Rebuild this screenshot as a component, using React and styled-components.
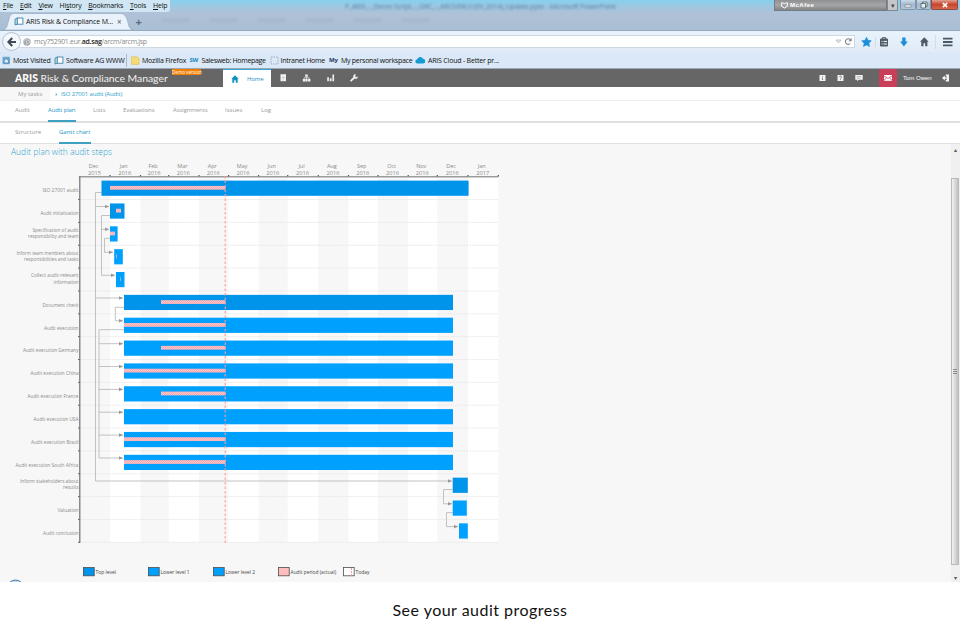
import React from "react";
import styled, { createGlobalStyle } from "styled-components";

const months = [
  ["Dec", "2015", 80],
  ["Jan", "2016", 110],
  ["Feb", "2016", 140.5],
  ["Mar", "2016", 168.7],
  ["Apr", "2016", 199],
  ["May", "2016", 228.6],
  ["Jun", "2016", 258.6],
  ["Jul", "2016", 287.7],
  ["Aug", "2016", 318.3],
  ["Sep", "2016", 348.5],
  ["Oct", "2016", 378],
  ["Nov", "2016", 408.2],
  ["Dec", "2016", 437.3],
  ["Jan", "2017", 468],
];
const chartEnd = 498.3;
const rowHeight = 22.85;

const TOP = "#0095eb";
const LOW = "#00a0ff";

// lines: [text, width], bar and actual: [from, to]
const tasks = [
  { lines: [["ISO 27001 audit", 36]], bar: [101.5, 468.6], fill: TOP, actual: [110, 225.5] },
  { lines: [["Audit initialization", 38]], bar: [110, 124.5], fill: TOP, actual: [116, 121] },
  {
    lines: [["Specification of audit", 46], ["responsibility and team", 50.5]],
    bar: [110, 117.6],
    fill: LOW,
    actual: [110, 115],
  },
  {
    lines: [["Inform team members about", 62], ["responsibilities and tasks", 54.5]],
    bar: [114.2, 122.8],
    fill: LOW,
    actual: [116, 116.7],
  },
  {
    lines: [["Collect audit-relevant", 47.5], ["information", 25]],
    bar: [116, 124.5],
    fill: LOW,
    actual: [120, 120.6],
  },
  { lines: [["Document check", 36]], bar: [124, 453], fill: TOP, actual: [161, 225.5] },
  { lines: [["Audit execution", 34.5]], bar: [124, 453], fill: LOW, actual: [124, 225.5] },
  { lines: [["Audit execution Germany", 55.5]], bar: [124, 453], fill: LOW, actual: [161, 225.5] },
  { lines: [["Audit execution China", 48]], bar: [124, 453], fill: LOW, actual: [124, 225.5] },
  { lines: [["Audit execution France", 51]], bar: [124, 453], fill: LOW, actual: [161, 225.5] },
  { lines: [["Audit execution USA", 45]], bar: [124, 453], fill: LOW },
  { lines: [["Audit execution Brazil", 47.5]], bar: [124, 453], fill: LOW, actual: [124, 225.5] },
  { lines: [["Audit execution South Africa", 63]], bar: [124, 453], fill: LOW, actual: [124, 225.5] },
  { lines: [["Inform stakeholders about", 58.5], ["results", 15.5]], bar: [452.7, 467.8], fill: TOP },
  { lines: [["Valuation", 21]], bar: [452.7, 466.8], fill: LOW },
  { lines: [["Audit conclusion", 35.5]], bar: [459, 467.8], fill: LOW },
];

const links = [
  "M101.5 192.5H95.5V481H452",
  "M95.5 206.5H109",
  "M95.5 298H123",
  "M110 215.5H101.5V275.3H115",
  "M101.5 229.3H109",
  "M110 238.3H104.5V252.3H113",
  "M124 307.3H115.3V320.8H123",
  "M124 329.7H99V458H123",
  "M99 343.7H123",
  "M99 366.5H123",
  "M99 389.4H123",
  "M99 412.2H123",
  "M99 435.1H123",
  "M452.5 489.5H443.5V503.8H452",
  "M452.5 512.6H446.5V526.6H458",
];

const legend = [
  { x: 83, label: "Top level", width: 20.5, fill: TOP },
  { x: 148, label: "Lower level 1", width: 29, fill: LOW },
  { x: 213, label: "Lower level 2", width: 29.5, fill: LOW },
  { x: 278, label: "Audit period (actual)", width: 45.5, fill: "#ffbcbc" },
  { x: 343, label: "Today", width: 14, fill: "#fff" },
];

const GanttChart = () => {
  return (
    <ChartSvg viewBox="0 158 951 424">
      <defs>
        <pattern id="hatch" width="2" height="2" patternUnits="userSpaceOnUse">
          <rect width="2" height="2" fill="#ffc4c6" />
          <rect width="1" height="1" fill="#f5a9b0" />
          <rect x="1" y="1" width="1" height="1" fill="#f5a9b0" />
        </pattern>
        <marker
          id="arrow"
          viewBox="0 0 4 4"
          refX="4"
          refY="2"
          markerWidth="4"
          markerHeight="4"
          markerUnits="userSpaceOnUse"
        >
          <path d="M0 0.2L4 2L0 3.8z" fill="#999" />
        </marker>
      </defs>
      {months.map(([name, year, x], i) => {
        const end = i < months.length - 1 ? months[i + 1][2] : chartEnd;
        const mid = (x + end) / 2;
        return (
          <g key={i}>
            {i % 2 === 1 && (
              <rect x={x} y="177" width={end - x} height="365" fill="#fff" />
            )}
            <text x={mid - 1.5} y="168.4" textAnchor="middle">
              {name}
            </text>
            <text
              x={mid - 7}
              y="175.4"
              textLength="13"
              lengthAdjust="spacingAndGlyphs"
            >
              {year}
            </text>
            <rect x={end - 0.6} y="175" width="1.2" height="1.6" fill="#555" />
          </g>
        );
      })}
      {tasks.map((task, i) => (
        <g key={i}>
          <line
            x1="80"
            x2={chartEnd}
            y1={176.7 + rowHeight * (i + 1)}
            y2={176.7 + rowHeight * (i + 1)}
            stroke="#e6e6e6"
            strokeWidth="0.8"
            strokeDasharray="2 0.7"
          />
          <rect x="78" y={176.2 + rowHeight * (i + 1)} width="2" height="1" fill="#666" />
        </g>
      ))}
      <rect x="79" y="176.2" width={chartEnd - 79} height="1.2" fill="#858585" />
      <rect x="79.2" y="176.2" width="1.2" height="366.5" fill="#6f6f6f" />
      {links.map((d) => (
        <path
          key={d}
          d={d}
          fill="none"
          stroke="#b4b4b4"
          strokeWidth="0.8"
          markerEnd="url(#arrow)"
        />
      ))}
      {tasks.map((task, i) => {
        const top = 180.6 + rowHeight * i;
        return (
          <g key={i}>
            {task.lines.map(([text, width], n) => (
              <text
                key={text}
                x={78.5 - width}
                y={top + 11.8 - (task.lines.length - 1 - n) * 6.4}
                textLength={width}
                lengthAdjust="spacingAndGlyphs"
              >
                {text}
              </text>
            ))}
            <rect
              x={task.bar[0]}
              y={top}
              width={task.bar[1] - task.bar[0]}
              height="15.2"
              fill={task.fill}
            />
            {task.actual && (
              <rect
                x={task.actual[0]}
                y={top + 5.3}
                width={task.actual[1] - task.actual[0]}
                height="3.8"
                fill="url(#hatch)"
              />
            )}
          </g>
        );
      })}
      <line
        x1="225.2"
        x2="225.2"
        y1="176"
        y2="543"
        stroke="#ff9a9a"
        strokeWidth="1.1"
        strokeDasharray="2.6 1.9"
      />
      {legend.map((item) => (
        <g key={item.label}>
          <rect
            x={item.x + 0.4}
            y="567.6"
            width="10.8"
            height="8.2"
            fill={item.fill}
            stroke="#4c4c4c"
            strokeWidth="0.8"
          />
          {item.label === "Today" && (
            <line x1="351.5" x2="351.5" y1="568" y2="575.6" stroke="#ff9a9a" strokeDasharray="2 1" />
          )}
          <text
            className="legend"
            x={item.x + 12.6}
            y="573.6"
            textLength={item.width}
            lengthAdjust="spacingAndGlyphs"
          >
            {item.label}
          </text>
        </g>
      ))}
      <circle cx="15.5" cy="588" r="8" fill="#c5d9ea" stroke="#3f77a5" strokeWidth="1" />
    </ChartSvg>
  );
};

const BrowserTop = () => {
  return (
    <TitleBar>
      <GhostTitle>
        P_ARIS_-_Demo Script_-_GRC_-_ARCM98.0 (09_2014)_Update.pptx - Microsoft PowerPoint
      </GhostTitle>
      <GhostMenu>
        <i /> <i /> <i /> <i /> <i /> <i />
      </GhostMenu>
      <MenuBar>
        {["File", "Edit", "View", "History", "Bookmarks", "Tools", "Help"].map((item) => {
          const at = item === "History" ? 2 : 0;
          return (
            <MenuItem key={item}>
              {item.slice(0, at)}
              <u>{item[at]}</u>
              {item.slice(at + 1)}
            </MenuItem>
          );
        })}
      </MenuBar>
      <WindowControls>
        <McAfee>
          <svg width="7" height="7" viewBox="0 0 7 7">
            <path d="M0.6 0.9H2.4L3.5 2L4.6 0.9H6.4V4.2L3.5 6L0.6 4.2z" fill="none" stroke="#fff" />
          </svg>
          McAfee
        </McAfee>
        <McDrop>▾</McDrop>
        <WinButton $width={16}>
          <svg width="8" height="8" viewBox="0 0 8 8">
            <rect x="1" y="4" width="6" height="2" fill="#fff" stroke="#667" strokeWidth="0.5" />
          </svg>
        </WinButton>
        <WinButton $width={15}>
          <svg width="8" height="8" viewBox="0 0 8 8">
            <path d="M2.5 2.5V1h4.5v4.5H5.5M1 2.5h4.5V7H1z" fill="#e8eef5" stroke="#566" strokeWidth="0.9" />
          </svg>
        </WinButton>
        <WinButton $width={27} $close>
          <svg width="8" height="8" viewBox="0 0 8 8">
            <path d="M1.8 2l4.4 4.2M6.2 2L1.8 6.2" stroke="#fff" strokeWidth="1.7" />
          </svg>
        </WinButton>
      </WindowControls>
      <TabStrip>
        <BrowserTab>
          <svg className="shape" width="132" height="17" viewBox="0 0 132 17">
            <path
              d="M0 17C6 16 5 12 7 6C8 2 9 0.5 13 0.5H118C122 0.5 123 2 125 6C127 12 126 16 132 17z"
              fill="#e9f2fb"
              stroke="#8fa3b8"
              strokeWidth="0.6"
            />
          </svg>
          <PageIcon />
          <span>ARIS Risk &amp; Compliance M...</span>
          <b>×</b>
        </BrowserTab>
        <NewTab>+</NewTab>
      </TabStrip>
    </TitleBar>
  );
};

const PageIcon = () => (
  <svg width="10" height="9" viewBox="0 0 10 9">
    <path d="M1 2.2L3.5 1v6.2L1 8z" fill="#b9dcee" stroke="#3c7796" strokeWidth="0.8" />
    <rect x="3.3" y="1" width="5.6" height="6.2" fill="#fff" stroke="#3f86ab" strokeWidth="0.9" />
  </svg>
);

const NavBar = () => {
  return (
    <Nav>
      <BackButton>
        <svg width="10" height="10" viewBox="0 0 10 10">
          <path d="M5.2 1L1.4 5L5.2 9M1.6 5H9" fill="none" stroke="#3f4b57" strokeWidth="2.1" />
        </svg>
      </BackButton>
      <UrlBox>
        <svg width="8" height="8" viewBox="0 0 8 8">
          <circle cx="4" cy="4" r="3.7" fill="#a4a9ae" />
          <path d="M1 2.5l2-1.2l1 1L3 4l1.2 1.2L3.5 7M5 1.2l.4 1.5L7 3.5L5.8 5.6" fill="none" stroke="#e5e8ea" strokeWidth="0.7" />
        </svg>
        <p>
          mcy752901.eur.<b>ad.sag</b>/arcm/arcm.jsp
        </p>
        <svg width="17" height="9" viewBox="0 0 17 9">
          <path d="M1 3h5L3.5 6z" fill="#eee" stroke="#a9afb5" strokeWidth="0.7" />
          <path d="M15.3 6.5a2.8 2.8 0 1 1 0-3.8" fill="none" stroke="#7b858f" strokeWidth="1.1" />
          <path d="M16.6 0.8v3.4h-3.2z" fill="#7b858f" />
        </svg>
      </UrlBox>
      <NavIcons viewBox="0 0 104 18">
        <path d="M10.5 4.3l1.5 3l3.3.5l-2.4 2.4l.6 3.3l-3-1.6l-3 1.6l.6-3.3L5.7 7.8l3.3-.5z" fill="#1e8fd6" stroke="#1e8fd6" strokeWidth="0.6" />
        <path d="M19.5 4v10M79.5 2v14" stroke="#ccd8e4" strokeWidth="0.8" />
        <rect x="24" y="5.6" width="8" height="8" rx="1" fill="#4f5a66" />
        <path d="M26.3 6V4.7h3.4V6" fill="none" stroke="#4f5a66" />
        <path d="M25.5 8.4h1M27.5 8.4h3.5M25.5 11h1M27.5 11h3.5" stroke="#fff" strokeWidth="1" />
        <path d="M46.2 4.5h3.4v4h2.2L47.9 13.5L44 8.500h2.2z" fill="#1e8fd6" />
        <path d="M68.3 4.3L64 8.7h1.3v4.6h2.2v-3h1.7v3h2.2V8.7h1.3z" fill="#4f5a66" />
        <path d="M87 5.6h9.5M87 9h9.5M87 12.4h9.5" stroke="#4c5864" strokeWidth="1.9" />
      </NavIcons>
    </Nav>
  );
};

const BookmarksBar = () => {
  return (
    <Bookmarks>
      <Bookmark $width={52}>
        <svg width="9" height="9" viewBox="0 0 9 9">
          <rect x="0.5" y="0.8" width="7.5" height="7.5" rx="1" fill="#6fa9d2" />
          <path d="M2 7V4.5L4.3 2.5L6.5 4.5V7z" fill="#d7ebf7" stroke="#2f78aa" strokeWidth="0.7" />
        </svg>
        Most Visited
      </Bookmark>
      <Bookmark $width={73} $divider>
        <PageIcon />
        Software AG WWW
      </Bookmark>
      <Bookmark $width={58.5}>
        <svg width="9" height="9" viewBox="0 0 9 9">
          <path d="M0.6 0.8h5.4l2 1.6v6H0.6z" fill="#f6dc72" stroke="#d7b645" strokeWidth="0.5" />
        </svg>
        Mozilla Firefox
      </Bookmark>
      <Bookmark $width={80} $space={-0.31}>
        <em>SW</em>
        Salesweb: Homepage
      </Bookmark>
      <Bookmark $width={59.5} $space={-0.26}>
        <svg width="9" height="9" viewBox="0 0 9 9">
          <rect x="1" y="1" width="7" height="7" fill="none" stroke="#93a0ab" strokeWidth="0.8" strokeDasharray="1.5 1" />
        </svg>
        Intranet Home
      </Bookmark>
      <Bookmark $width={86} $space={-0.27}>
        <em className="my">My</em>
        My personal workspace
      </Bookmark>
      <Bookmark $width={90}>
        <svg width="11" height="8" viewBox="0 0 11 8">
          <path d="M2.6 7.5a2.1 2.1 0 0 1-.3-4.2A3 3 0 0 1 8 2.8a2.4 2.4 0 0 1 .5 4.7z" fill="#149bd2" />
        </svg>
        ARIS Cloud - Better pr...
      </Bookmark>
    </Bookmarks>
  );
};

const AppHeader = () => {
  return (
    <Header>
      <Brand>
        <b>ARIS</b> Risk &amp; Compliance Manager
      </Brand>
      <Demo>Demo version</Demo>
      <HomeTab>
        <svg width="8" height="8" viewBox="0 0 8 8">
          <path d="M4 0.3L0.3 4H1.3v3.700h1.900V5.200h1.600v2.500h1.900V4h1z" fill="#1390bf" />
        </svg>
        Home
      </HomeTab>
      <HeaderIcons viewBox="0 0 100 18">
        <path d="M9.500 5.200h5.500v7h-5.500z" fill="#f4f4f4" />
        <path d="M9.500 8.700h5.500M12.200 5.200v7" stroke="#bbb" strokeWidth="0.500" />
        <path d="M34.200 5.400h2.600v2.400h-2.600zM31.800 10h2.400v2.400h-2.400zM34.400 10h2.200v2.400h-2.200zM37 10h2.400v2.400H37z" fill="#eee" />
        <path d="M33 10V8.800h5.200V10M35.500 7.500V10" fill="none" stroke="#eee" strokeWidth="0.700" />
        <path d="M56.200 8.300h1.700v4h-1.700zM58.800 9.300h1.700v3h-1.700zM61.400 5.600h1.700v6.700h-1.700z" fill="#eee" />
        <path d="M79.600 12.200l3.900-3.900" stroke="#f2f2f2" strokeWidth="1.800" />
        <path d="M84.900 5.300a2.300 2.300 0 1 0 1.900 2.100l-1.700.8l-.9-.9z" fill="#f2f2f2" />
      </HeaderIcons>
      <Spacer />
      <InfoIcons viewBox="0 0 50 18">
        <rect x="0.500" y="6" width="6" height="6" fill="#f2f2f2" />
        <path d="M3.500 7v.8M3.500 8.600v2.400" stroke="#777" strokeWidth="0.900" />
        <rect x="18.500" y="6" width="6" height="6" fill="#f2f2f2" />
        <path d="M20.600 8a.9.9 0 1 1 1.300.8l-.3.800M21.600 10.300v.8" fill="none" stroke="#666" strokeWidth="0.800" />
        <path d="M36.300 6h7.400v4.800h-4l-1.500 1.500v-1.500h-1.900z" fill="#f2f2f2" />
        <path d="M37.800 7.700h4.400M37.800 9.200h3" stroke="#999" strokeWidth="0.600" />
      </InfoIcons>
      <MailButton>
        <svg width="8" height="6" viewBox="0 0 8 6">
          <rect width="8" height="5.800" fill="#fff" />
          <path d="M0 1l4 2.500L8 1M0 5.200l2.300-2M8 5.200l-2.300-2" fill="none" stroke="#c93f59" strokeWidth="0.800" />
        </svg>
      </MailButton>
      <UserName>Tom Owen</UserName>
      <svg width="8" height="8" viewBox="0 0 8 8">
        <path d="M3.800 0.500h3.200v7H3.800V5.800h1V2.200h-1z" fill="#f4f4f4" />
        <path d="M0 4l2.800-2.500v1.700h2v1.600h-2v1.700z" fill="#f4f4f4" />
      </svg>
    </Header>
  );
};

const App = () => {
  return (
    <Page>
      <GlobalStyle />
      <BrowserTop />
      <NavBar />
      <BookmarksBar />
      <AppHeader />
      <Crumbs>
        <Crumb $width={37}>My tasks</Crumb>
        <Crumb $width={100} $active>
          <i>›</i>ISO 27001 audit (Audit)
        </Crumb>
      </Crumbs>
      <Tabs $height={22} $line={2}>
        <Tab $width={15}>Audit</Tab>
        <Tab $width={28} $gap={18} $active $space={-0.12}>Audit plan</Tab>
        <Tab $width={13} $gap={17}>Lists</Tab>
        <Tab $width={32} $gap={17} $space={-0.05}>Evaluations</Tab>
        <Tab $width={35} $gap={18} $space={-0.1}>Assignments</Tab>
        <Tab $width={19} $gap={17}>Issues</Tab>
        <Tab $width={11} $gap={17}>Log</Tab>
      </Tabs>
      <Tabs $height={21} $line={1}>
        <Tab $width={27}>Structure</Tab>
        <Tab $width={32} $gap={17} $active $space={-0.03}>Gantt chart</Tab>
      </Tabs>
      <Content>
        <Main>
          <h2>Audit plan with audit steps</h2>
          <GanttChart />
        </Main>
        <ScrollBar>
          <ScrollArrow>▴</ScrollArrow>
          <Thumb>
            <i />
            <i />
            <i />
          </Thumb>
          <ScrollArrow>▾</ScrollArrow>
        </ScrollBar>
      </Content>
      <Caption>See your audit progress</Caption>
    </Page>
  );
};

const GlobalStyle = createGlobalStyle`
  * {
    margin: 0;
    padding: 0;
    box-sizing: border-box;
  }
  body {
    background: #fff;
    font-family: "Open Sans", sans-serif;
    overflow: hidden;
  }
  svg {
    display: block;
    flex-shrink: 0;
  }
`;

const Page = styled.div`
  display: flex;
  flex-direction: column;
  width: 960px;
  height: 637px;
  background: #fff;
`;

const TitleBar = styled.div`
  position: relative;
  height: 31px;
  flex-shrink: 0;
  display: flex;
  flex-wrap: wrap;
  justify-content: space-between;
  align-content: space-between;
  border-bottom: 1px solid #92a9bf;
  background: linear-gradient(#86d0ee 0, #a0c7e0 7px, #b0c1d6 14px, #a9bfd3 30px);
  overflow: hidden;
`;

const GhostTitle = styled.p`
  position: absolute;
  left: 345px;
  top: 1px;
  width: 280px;
  font-size: 7px;
  line-height: 11px;
  letter-spacing: -0.2px;
  white-space: nowrap;
  color: #28587c;
  opacity: 0.6;
  filter: blur(0.9px);
`;

const GhostMenu = styled.div`
  position: absolute;
  left: 162px;
  top: 19px;
  display: flex;
  gap: 20px;
  filter: blur(1.5px);
  opacity: 0.35;
  i {
    width: 28px;
    height: 3px;
    background: #8fa4bb;
  }
`;

const MenuBar = styled.div`
  position: relative;
  display: flex;
  align-items: center;
  gap: 6.8px;
  width: 170px;
  height: 12px;
  padding-left: 3px;
  background: linear-gradient(90deg, #d3e7f3, #cfe6f4);
  border-radius: 0 0 3px 0;
`;

const MenuItem = styled.span`
  font-size: 7px;
  line-height: 12px;
  letter-spacing: -0.22px;
  color: #111;
  u {
    text-decoration-thickness: 0.5px;
    text-underline-offset: 1px;
  }
`;

const WindowControls = styled.div`
  display: flex;
  height: 11px;
  margin-right: 2px;
`;

const McAfee = styled.div`
  display: flex;
  align-items: center;
  gap: 2px;
  width: 113px;
  padding-left: 6px;
  font: bold 6px/10px "Liberation Sans", sans-serif;
  letter-spacing: 0.5px;
  color: #fff;
  background: linear-gradient(#8e9092, #a5a6a7 50%, #838587);
  border: 1px solid #747a80;
  border-top: none;
`;

const McDrop = styled.div`
  width: 11px;
  margin-right: 2px;
  font-size: 7px;
  line-height: 11px;
  text-align: center;
  color: #444;
  background: #c4c6c9;
  border: 1px solid #82888e;
  border-top: none;
`;

const WinButton = styled.div`
  display: flex;
  align-items: center;
  justify-content: center;
  width: ${(props) => props.$width}px;
  height: 10px;
  border: 1px solid ${(props) => (props.$close ? "#8d4a44" : "#8195aa")};
  border-top: none;
  border-radius: 0 0 2px 2px;
  background: ${(props) =>
    props.$close
      ? "linear-gradient(#e0a092, #c8452c 50%, #d4664a)"
      : "linear-gradient(#cbdbe9, #a3b9cf 50%, #b3c8da)"};
`;

const TabStrip = styled.div`
  position: relative;
  display: flex;
  align-items: center;
  width: 100%;
  height: 17px;
  padding-left: 5px;
`;

const BrowserTab = styled.div`
  position: relative;
  display: flex;
  align-items: center;
  width: 127px;
  height: 17px;
  padding-left: 9px;
  font-size: 7px;
  letter-spacing: -0.12px;
  color: #111;
  white-space: nowrap;
  > * {
    position: relative;
  }
  .shape {
    position: absolute;
    left: -3px;
    top: 0;
  }
  span {
    width: 91px;
    margin-left: 2px;
  }
  b {
    font-size: 8px;
    color: #777;
  }
`;

const NewTab = styled.span`
  margin-left: 3.5px;
  font: bold 11px/15px "Open Sans", sans-serif;
  color: #5b6c7c;
`;

const Nav = styled.div`
  display: flex;
  align-items: center;
  height: 21px;
  flex-shrink: 0;
  background: linear-gradient(#e9f3fc, #e0ebf7);
`;

const BackButton = styled.div`
  position: relative;
  display: flex;
  align-items: center;
  justify-content: center;
  width: 19px;
  height: 19px;
  margin-left: 2px;
  background: #f3f8fc;
  border: 1px solid #b4c3d1;
  border-radius: 50%;
`;

const UrlBox = styled.div`
  display: flex;
  align-items: center;
  width: 836px;
  height: 13px;
  margin-left: -2px;
  padding: 0 2px 0 4px;
  background: #fff;
  border: 1px solid #ccd8e3;
  border-left: none;
  p {
    flex: 1;
    margin-left: 3px;
    font-size: 7px;
    letter-spacing: -0.31px;
    line-height: 11px;
    color: #8a8a8a;
  }
  b {
    font-weight: 600;
    color: #222;
  }
`;

const NavIcons = styled.svg`
  width: 104px;
  height: 18px;
  margin-left: 1px;
`;

const Bookmarks = styled.div`
  display: flex;
  align-items: center;
  height: 17px;
  flex-shrink: 0;
  padding-left: 2px;
  background: #dae8f7;
  border-bottom: 1px solid #9aa7b6;
`;

const Bookmark = styled.div`
  display: flex;
  align-items: center;
  gap: 2px;
  width: ${(props) => props.$width}px;
  height: 13px;
  font-size: 7px;
  letter-spacing: ${(props) => props.$space || -0.2}px;
  white-space: nowrap;
  color: #111;
  border-right: ${(props) => (props.$divider ? "1px solid #aebac6" : "none")};
  margin-right: ${(props) => (props.$divider ? "4px" : "0")};
  em {
    width: 10px;
    font: bold 6px "Open Sans", sans-serif;
    color: #1687c4;
  }
  .my {
    color: #26335c;
  }
`;

const Header = styled.div`
  display: flex;
  align-items: center;
  height: 18px;
  flex-shrink: 0;
  padding: 0 10px 0 15px;
  background: #666;
`;

const Brand = styled.h1`
  width: 157px;
  font: 400 10.4px/18px Lato, sans-serif;
  letter-spacing: -0.02px;
  white-space: nowrap;
  color: #f2f2f2;
  b {
    font-weight: 900;
    color: #fff;
  }
`;

const Demo = styled.span`
  align-self: flex-start;
  width: 29px;
  height: 6px;
  font: 4.6px/6px "Open Sans", sans-serif;
  text-align: center;
  white-space: nowrap;
  color: #fff;
  background: #f07d00;
`;

const HomeTab = styled.div`
  display: flex;
  align-items: center;
  gap: 8px;
  width: 48px;
  height: 18px;
  margin-left: 22px;
  padding-left: 8px;
  font-size: 6px;
  letter-spacing: -0.1px;
  color: #1894c2;
  background: #fff;
  border-top: 1px solid #35a9d3;
`;

const HeaderIcons = styled.svg`
  width: 100px;
  height: 18px;
`;

const Spacer = styled.div`
  flex: 1;
`;

const InfoIcons = styled.svg`
  width: 50px;
  height: 18px;
`;

const MailButton = styled.div`
  display: flex;
  align-items: center;
  justify-content: center;
  width: 18px;
  height: 18px;
  margin-left: 10px;
  background: #c93f59;
`;

const UserName = styled.span`
  width: 39px;
  margin-left: 6px;
  font: 6px/18px "Liberation Sans", sans-serif;
  white-space: nowrap;
  color: #fff;
`;

const Crumbs = styled.div`
  display: flex;
  align-items: center;
  height: 14px;
  flex-shrink: 0;
  padding-left: 18px;
  border-bottom: 1px solid #eee;
  background: linear-gradient(90deg, #f7f7f7 50px, #fff 51px);
`;

const Crumb = styled.span`
  display: flex;
  width: ${(props) => props.$width}px;
  font-size: 6px;
  letter-spacing: ${(props) => (props.$active ? -0.13 : 0)}px;
  white-space: nowrap;
  color: ${(props) => (props.$active ? "#2ba3cb" : "#999")};
  i {
    width: 6px;
    font-style: normal;
    font-weight: bold;
  }
`;

const Tabs = styled.div`
  display: flex;
  height: ${(props) => props.$height}px;
  flex-shrink: 0;
  padding-left: 15px;
  border-bottom: ${(props) => props.$line}px solid #e0e0e0;
`;

const Tab = styled.span`
  width: ${(props) => props.$width}px;
  height: 21px;
  margin-left: ${(props) => props.$gap || 0}px;
  font-size: 6px;
  line-height: 18px;
  letter-spacing: ${(props) => props.$space || 0}px;
  white-space: nowrap;
  color: ${(props) => (props.$active ? "#1d96c0" : "#999")};
  border-bottom: 2px solid ${(props) => (props.$active ? "#3fa0c1" : "transparent")};
`;

const Content = styled.div`
  display: flex;
  height: 438px;
  flex-shrink: 0;
  background: #f7f7f7;
`;

const Main = styled.div`
  width: 951px;
  h2 {
    height: 14px;
    padding-left: 11px;
    font: 300 8.5px/15px "Open Sans", sans-serif;
    color: #2fa3cc;
  }
`;

const ChartSvg = styled.svg`
  width: 951px;
  height: 424px;
  text {
    font: 5.5px "Open Sans", sans-serif;
    fill: #8a8a8a;
  }
  .legend {
    font-size: 5.2px;
    fill: #444;
  }
`;

const ScrollBar = styled.div`
  display: flex;
  flex-direction: column;
  justify-content: space-between;
  width: 9px;
  background: #f0f0f0;
`;

const ScrollArrow = styled.div`
  height: 10px;
  font: 6px/11px "DejaVu Sans", sans-serif;
  text-align: center;
  color: #555;
`;

const Thumb = styled.div`
  display: flex;
  flex-direction: column;
  align-items: center;
  justify-content: center;
  gap: 1px;
  width: 8px;
  height: 387px;
  margin-top: 17px;
  border: 1px solid #b9b9b9;
  background: linear-gradient(90deg, #f2f2f2, #d9d9d9 50%, #c2c2c2);
  i {
    width: 4px;
    height: 1px;
    background: #8d8d8d;
  }
`;

const Caption = styled.p`
  height: 55px;
  font: 16px/56px Lato, sans-serif;
  letter-spacing: 0.48px;
  text-align: center;
  color: #111;
`;

export default App;
